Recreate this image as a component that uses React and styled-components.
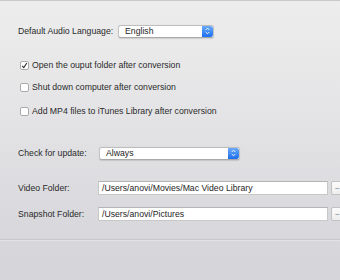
import React from "react";
import styled, { createGlobalStyle } from "styled-components";

const Global = createGlobalStyle`
  html, body { margin: 0; padding: 0; }
  body { width: 340px; height: 280px; overflow: hidden; font-family: "Liberation Sans", Arial, sans-serif; }
`;

const Window = styled.div`
  width: 340px;
  height: 280px;
  overflow: hidden;
  box-sizing: border-box;
  border-top: 1px solid #c9c9c9;
  background: linear-gradient(to bottom, #ededed 0%, #e4e4e6 40%, #dadade 75%, #d5d5d9 100%);
  display: flex;
  flex-direction: column;
  padding-left: 18px;
  color: #2a2a2a;
  font-size: 8.7px;
`;

const Row = styled.div`
  display: flex;
  align-items: center;
  height: 14px;
  margin-top: ${(p) => p.$mt}px;
  white-space: nowrap;
`;

const Label = styled.span`
  width: ${(p) => p.$w}px;
  flex: none;
`;

const Popup = styled.div`
  width: ${(p) => p.$w}px;
  height: ${(p) => p.$h}px;
  box-sizing: border-box;
  display: flex;
  align-items: stretch;
  background: #fff;
  border: 1px solid #c4c4c4;
  border-top-color: #bdbdbd;
  border-bottom-color: #a9a9a9;
  border-radius: 3px;
  box-shadow: 0 0.5px 1px rgba(0, 0, 0, 0.12);
  overflow: hidden;
`;

const PopupText = styled.span`
  flex: 1;
  padding-left: 6px;
  line-height: ${(p) => p.$h - 2}px;
  color: #1e1e1e;
`;

const Stepper = styled.div`
  width: 11px;
  flex: none;
  display: flex;
  align-items: center;
  justify-content: center;
  border-radius: 0 2px 2px 0;
  background: linear-gradient(to bottom, #6aaaf9, #1c6ef0);
`;

const Arrows = () => (
  <svg width="5" height="8" viewBox="0 0 5 8">
    <path d="M0.7 3 L2.5 1.2 L4.3 3 M0.7 5 L2.5 6.8 L4.3 5" fill="none" stroke="#fff" strokeWidth="0.9" />
  </svg>
);

const CheckRow = styled(Row)`
  gap: 3px;
  padding-left: 2px;
`;

const Box = styled.span`
  width: 9px;
  height: 9px;
  box-sizing: border-box;
  flex: none;
  border: 1px solid #ababab;
  border-radius: 2px;
  background: #fff;
  display: flex;
  align-items: center;
  justify-content: center;
`;

const Check = () => (
  <svg width="7" height="7" viewBox="0 0 7 7">
    <path d="M1.2 3.8 L2.8 5.6 L5.8 1" fill="none" stroke="#2a2a2a" strokeWidth="1.1" />
  </svg>
);

const Field = styled.div`
  width: 230px;
  height: 14px;
  box-sizing: border-box;
  flex: none;
  background: #fff;
  border: 1px solid #c8c8c8;
  border-top-color: #b4b4b4;
  padding-left: 3px;
  line-height: 12px;
  color: #1e1e1e;
`;

const Browse = styled.div`
  margin-left: 3px;
  width: 22px;
  height: 14px;
  flex: none;
  box-sizing: border-box;
  background: linear-gradient(to bottom, #fbfbfb, #eeeeee);
  border: 1px solid #c2c2c2;
  border-radius: 2px;
  font-size: 7px;
  letter-spacing: -0.6px;
  line-height: 10px;
  padding-left: 3px;
  color: #333;
`;

const Separator = styled.div`
  margin-top: 18px;
  margin-left: -18px;
  height: 1px;
  background: #c8c8cc;
  box-shadow: 0 1px 0 #e2e2e5;
`;

export default function App() {
  return (
    <>
      <Global />
      <Window>
        <Row $mt={23}>
          <Label $w={100}>Default Audio Language:</Label>
          <Popup $w={96} $h={13}>
            <PopupText $h={13}>English</PopupText>
            <Stepper><Arrows /></Stepper>
          </Popup>
        </Row>
        <CheckRow $mt={20}>
          <Box><Check /></Box>
          <span>Open the ouput folder after conversion</span>
        </CheckRow>
        <CheckRow $mt={8}>
          <Box />
          <span>Shut down computer after conversion</span>
        </CheckRow>
        <CheckRow $mt={10}>
          <Box />
          <span>Add MP4 files to iTunes Library after conversion</span>
        </CheckRow>
        <Row $mt={28}>
          <Label $w={81}>Check for update:</Label>
          <Popup $w={141} $h={13}>
            <PopupText $h={13}>Always</PopupText>
            <Stepper><Arrows /></Stepper>
          </Popup>
        </Row>
        <Row $mt={21}>
          <Label $w={80}>Video Folder:</Label>
          <Field>/Users/anovi/Movies/Mac Video Library</Field>
          <Browse>...</Browse>
        </Row>
        <Row $mt={12}>
          <Label $w={80}>Snapshot Folder:</Label>
          <Field>/Users/anovi/Pictures</Field>
          <Browse>...</Browse>
        </Row>
        <Separator />
      </Window>
    </>
  );
}
